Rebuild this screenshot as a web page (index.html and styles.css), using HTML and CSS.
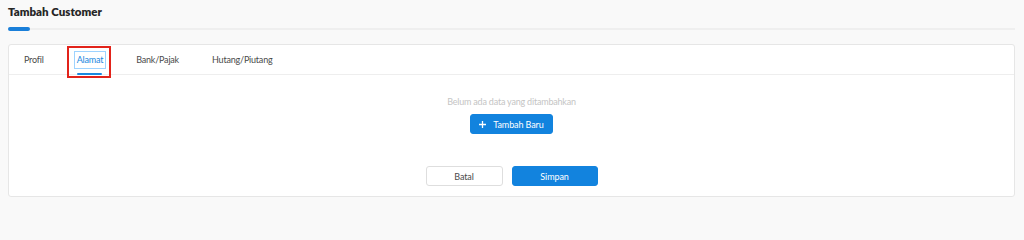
FILE: index.html
```html
<!DOCTYPE html>
<html lang="id">
<head>
<meta charset="utf-8">
<title>Tambah Customer</title>
<link rel="stylesheet" href="styles.css">
</head>
<body>
<div class="page">
  <header class="page-header">
    <h1 class="title">Tambah Customer</h1>
    <div class="progress"><span class="progress-bar"></span><span class="progress-rest"></span></div>
  </header>
  <section class="card">
    <nav class="tabs">
      <div class="tab"><span class="tab-label">Profil</span></div>
      <div class="tab active"><span class="tab-label">Alamat</span><span class="annot"></span></div>
      <div class="tab"><span class="tab-label">Bank/Pajak</span></div>
      <div class="tab"><span class="tab-label">Hutang/Piutang</span></div>
    </nav>
    <div class="card-body">
      <p class="empty">Belum ada data yang ditambahkan</p>
      <button class="btn btn-primary btn-add" type="button">
        <svg class="plus" width="7" height="7" viewBox="0 0 7 7"><path d="M3.5 0V7M0 3.5H7" stroke="#fff" stroke-width="1.3" fill="none"/></svg>
        <span>Tambah Baru</span>
      </button>
      <div class="actions">
        <button class="btn btn-default btn-cancel" type="button">Batal</button>
        <button class="btn btn-primary btn-save" type="button">Simpan</button>
      </div>
    </div>
  </section>
</div>
</body>
</html>
```

FILE: styles.css
```css
* { box-sizing: border-box; }
html, body { margin: 0; padding: 0; }
body {
  background: #f9f9f9;
  font-family: Lato, "Noto Sans", sans-serif;
  color: #444;
}
.page { padding: 0 9px 0 8px; }
.page-header { padding-top: 4px; }
.title {
  margin: 0;
  font-size: 11.5px;
  line-height: 16px;
  font-weight: 800;
  color: #262626;
}
.progress {
  margin-top: 7px;
  height: 4px;
  display: flex;
  align-items: center;
}
.progress-bar {
  width: 22px; height: 4px; border-radius: 2px;
  background: #1a7fd9;
}
.progress-rest {
  flex: 1; height: 2px; background: #efefef;
}
.card {
  margin-top: 13px;
  height: 153px;
  background: #fff;
  border: 1px solid #e6e6e6;
  border-radius: 3px;
  display: flex;
  flex-direction: column;
}
.tabs {
  display: flex;
  gap: 33px;
  padding-left: 15px;
  height: 30px;
  border-bottom: 1px solid #eeeeee;
}
.tab {
  position: relative;
  display: flex;
  align-items: center;
  font-size: 9px;
  letter-spacing: -0.2px;
  color: #4a4a4a;
}
.tab-label { line-height: 12px; }
.tab.active { color: #1a88e0; }
.tab.active .tab-label {
  outline: 1px solid #9ed3ff;
  outline-offset: 2px;
}
.tab.active::after {
  content: "";
  position: absolute;
  left: 0; right: 1px; bottom: -1px;
  height: 2px;
  background: #1a88e0;
  border-radius: 1px;
}
.annot {
  position: absolute;
  left: -10px; right: -8px; top: 1px; bottom: -4px;
  border: 2px solid #e2231a;
}
.card-body {
  flex: 1;
  display: flex;
  flex-direction: column;
  align-items: center;
  padding-top: 20px;
}
.empty {
  margin: 0;
  font-size: 9px;
  letter-spacing: -0.2px;
  line-height: 14px;
  color: #c4c4c4;
}
.btn {
  font-family: inherit;
  font-size: 9px;
  letter-spacing: -0.1px;
  height: 20px;
  border-radius: 3px;
  padding: 0;
  display: inline-flex;
  align-items: center;
  justify-content: center;
  cursor: pointer;
}
.btn-primary {
  background: #1283de;
  border: 1px solid #1283de;
  color: #fff;
}
.btn-default {
  background: #fff;
  border: 1px solid #dedede;
  color: #4a4a4a;
}
.btn-add {
  margin-top: 5px;
  width: 83px;
  gap: 7px;
}
.plus { display: block; }
.actions {
  margin-top: 32px;
  display: flex;
  gap: 9px;
}
.btn-cancel { width: 77px; }
.btn-save { width: 86px; }
```
